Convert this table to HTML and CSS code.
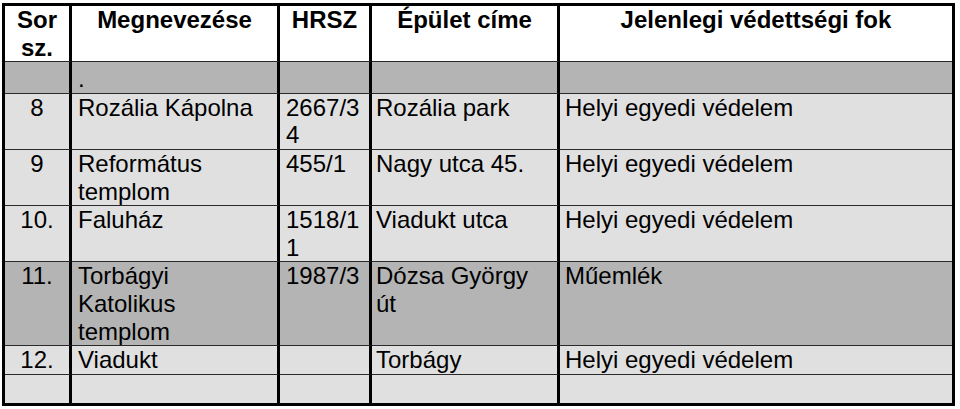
FILE: index.html
```html
<!DOCTYPE html>
<html lang="hu">
<head>
<meta charset="utf-8">
<title>Védett épületek</title>
<link rel="stylesheet" href="styles.css">
</head>
<body>
<table class="tbl">
  <thead>
    <tr class="head">
      <th class="c1">Sor sz.</th>
      <th class="c2">Megnevezése</th>
      <th class="c3">HRSZ</th>
      <th class="c4">Épület címe</th>
      <th class="c5">Jelenlegi védettségi fok</th>
    </tr>
  </thead>
  <tbody>
    <tr class="dark dot">
      <td class="c1"></td>
      <td class="c2">.</td>
      <td class="c3"></td>
      <td class="c4"></td>
      <td class="c5"></td>
    </tr>
    <tr class="light">
      <td class="c1">8</td>
      <td class="c2">Rozália Kápolna</td>
      <td class="c3">2667/34</td>
      <td class="c4">Rozália park</td>
      <td class="c5">Helyi egyedi védelem</td>
    </tr>
    <tr class="light">
      <td class="c1">9</td>
      <td class="c2">Református templom</td>
      <td class="c3">455/1</td>
      <td class="c4">Nagy utca 45.</td>
      <td class="c5">Helyi egyedi védelem</td>
    </tr>
    <tr class="light">
      <td class="c1">10.</td>
      <td class="c2">Faluház</td>
      <td class="c3">1518/11</td>
      <td class="c4">Viadukt utca</td>
      <td class="c5">Helyi egyedi védelem</td>
    </tr>
    <tr class="dark">
      <td class="c1">11.</td>
      <td class="c2">Torbágyi Katolikus templom</td>
      <td class="c3">1987/3</td>
      <td class="c4">Dózsa György út</td>
      <td class="c5">Műemlék</td>
    </tr>
    <tr class="light">
      <td class="c1">12.</td>
      <td class="c2">Viadukt</td>
      <td class="c3"></td>
      <td class="c4">Torbágy</td>
      <td class="c5">Helyi egyedi védelem</td>
    </tr>
    <tr class="light empty last">
      <td class="c1"></td>
      <td class="c2"></td>
      <td class="c3"></td>
      <td class="c4"></td>
      <td class="c5"></td>
    </tr>
  </tbody>
</table>
</body>
</html>
```

FILE: styles.css
```css
html, body {
  margin: 0;
  padding: 0;
  background: #ffffff;
}

body {
  padding: 3px 0 0 2px;
  font-family: "Liberation Sans", Arial, sans-serif;
  font-size: 24px;
  color: #000;
}

.tbl {
  border-collapse: separate;
  border-spacing: 0;
  table-layout: fixed;
  width: 953px;
  border: 3px solid #000;
}

.tbl th,
.tbl td {
  box-sizing: border-box;
  padding: 0;
  line-height: 27.6px;
  vertical-align: top;
  text-align: left;
  border-right: 3px solid #000;
  border-bottom: 1px solid #2a2a2a;
  overflow: hidden;
}

.tbl .c5 {
  border-right: none;
}

.tbl .last td {
  border-bottom: none;
}

.head th {
  background: #ffffff;
  font-weight: bold;
  text-align: center;
  padding: 0 2px;
}

.c1 { width: 67px; }
.c2 { width: 208px; }
.c3 { width: 92px; }
.c4 { width: 188px; }
.c5 { width: 392px; }

td.c1 { text-align: center; padding: 0 2px; }
td.c2 { padding: 0 12px 0 6px; }
td.c3 { padding: 0 8px 0 6px; word-break: break-all; }
td.c4 { padding: 0 10px 0 4px; }
td.c5 { padding: 0 8px 0 5px; }

.light td { background: #e0e0e0; }
.dark td { background: #b4b4b4; }

.dot td { height: 31px; padding-top: 3px; }
.empty td { height: 28px; }
```
